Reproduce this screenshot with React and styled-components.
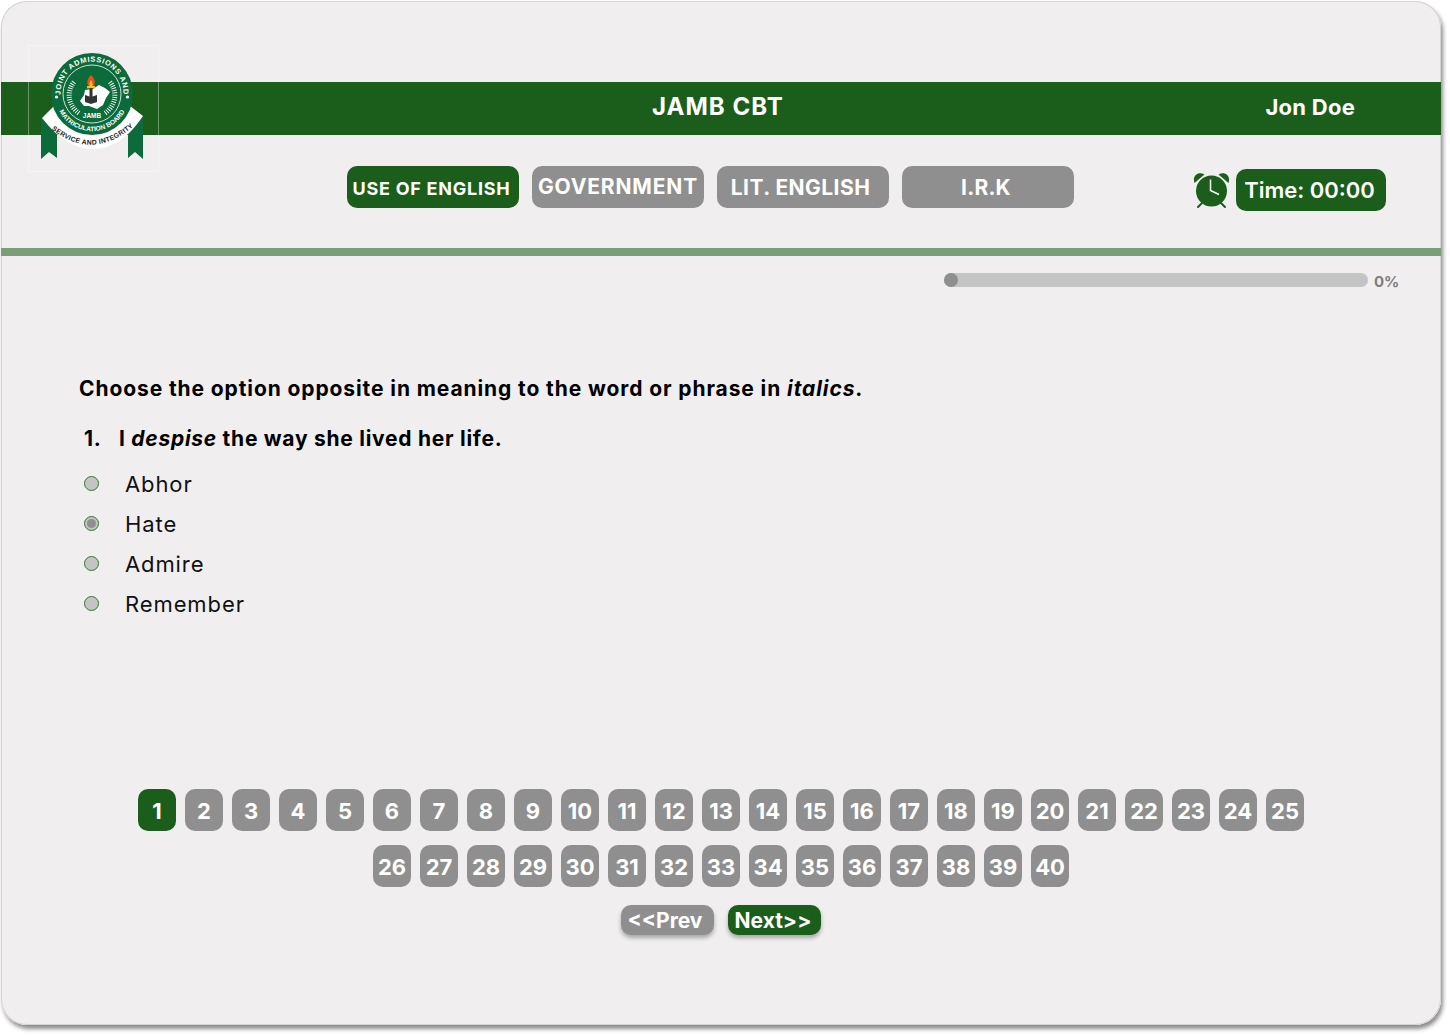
import React from 'react';
import styled, { createGlobalStyle } from 'styled-components';

const GREEN = '#1b5e1b';
const GREY = '#8f8f8f';
const LOGO_GREEN = '#0b6b3a';

const GlobalStyle = createGlobalStyle`
  html, body {
    margin: 0;
    padding: 0;
    background: #fff;
  }
  body {
    font-family: Inter, "Liberation Sans", sans-serif;
  }
`;

const Page = styled.div`
  box-sizing: border-box;
  width: 1450px;
  height: 1035px;
  padding: 1px;
  overflow: hidden;
`;

const Frame = styled.div`
  position: relative;
  box-sizing: border-box;
  width: 1440px;
  height: 1024px;
  padding-top: 81px;
  background: #f0eeef;
  border-radius: 26px;
  overflow: hidden;
  box-shadow: inset 0 0 0 1px #d4d2d3;
`;

const FrameShadow = styled.div`
  width: 1440px;
  border-radius: 26px;
  box-shadow: 2px 4px 4px rgba(0, 0, 0, 0.45);
`;

const Logo = styled.svg`
  position: absolute;
  left: 27px;
  top: 44px;
  width: 131px;
  height: 127px;
`;

const Header = styled.header`
  display: flex;
  align-items: center;
  height: 53px;
  background: ${GREEN};
  color: #fff;
  font-weight: 700;
`;

const Title = styled.div`
  margin: 0 0 4px 651px;
  font-size: 24px;
  letter-spacing: 1px;
`;

const UserName = styled.div`
  margin: 0 86px 4px auto;
  font-size: 22px;
  letter-spacing: 0.25px;
`;

const SubjectRow = styled.div`
  display: flex;
  align-items: flex-start;
  height: 113px;
  padding: 31px 55px 0 346px;
  box-sizing: border-box;
`;

const Subjects = styled.nav`
  display: flex;
  gap: 13px;
`;

const SubjectTab = styled.div`
  display: flex;
  align-items: center;
  justify-content: center;
  width: 172px;
  height: 42px;
  box-sizing: border-box;
  padding: ${(p) => p.$pad};
  border-radius: 10px;
  background: ${(p) => (p.$active ? GREEN : GREY)};
  color: #fff;
  font-weight: 700;
  font-size: ${(p) => p.$size}px;
  letter-spacing: ${(p) => p.$spacing}px;
  white-space: nowrap;
`;

const TimerGroup = styled.div`
  display: flex;
  align-items: center;
  gap: 6px;
  margin-left: auto;
  margin-top: 3px;
`;

const ClockIcon = styled.svg`
  width: 37px;
  height: 37px;
`;

const TimerPill = styled.div`
  display: flex;
  align-items: center;
  justify-content: center;
  box-sizing: border-box;
  width: 150px;
  height: 42px;
  padding-right: 3px;
  border-radius: 10px;
  background: ${GREEN};
  color: #fff;
  font-size: 22px;
  font-weight: 600;
`;

const Divider = styled.div`
  height: 8px;
  background: #7a9f78;
`;

const ProgressRow = styled.div`
  display: flex;
  align-items: center;
  gap: 6px;
  margin: 17px 0 0 943px;
  height: 14px;
`;

const ProgressTrack = styled.div`
  width: 424px;
  height: 14px;
  border-radius: 7px;
  background: #c4c4c4;
`;

const ProgressKnob = styled.div`
  width: 14px;
  height: 14px;
  border-radius: 50%;
  background: ${GREY};
`;

const ProgressLabel = styled.span`
  padding-top: 2px;
  font-size: 15px;
  font-weight: 700;
  color: #7d7d7d;
`;

const Question = styled.section`
  padding: 88px 0 0 78px;
`;

const Instruction = styled.p`
  margin: 0;
  font-size: 21px;
  line-height: 28px;
  font-weight: 700;
  color: #000;
  letter-spacing: 0.9px;
`;

const Prompt = styled.div`
  display: flex;
  margin: 22px 0 11px 5px;
  font-size: 21px;
  line-height: 28px;
  font-weight: 700;
  color: #000;
  letter-spacing: 0.73px;
`;

const PromptNumber = styled.span`
  width: 35px;
`;

const Options = styled.div`
  display: flex;
  flex-direction: column;
  padding-left: 5px;
`;

const Option = styled.label`
  display: flex;
  align-items: center;
  height: 40px;
  font-size: 22px;
  letter-spacing: 0.9px;
  color: #111;
`;

const Radio = styled.span`
  display: flex;
  align-items: center;
  justify-content: center;
  width: 15px;
  height: 15px;
  margin: -1px 26px 0 0;
  box-sizing: border-box;
  border-radius: 50%;
  border: 1px solid #2e7a2e;
  background: #c4c4c4;

  &::after {
    content: '';
    display: ${(p) => (p.$checked ? 'block' : 'none')};
    width: 9px;
    height: 9px;
    border-radius: 50%;
    background: ${GREY};
  }
`;

const Pagination = styled.div`
  position: absolute;
  left: 0;
  right: 0;
  bottom: 90px;
  display: flex;
  flex-direction: column;
  align-items: center;
`;

const NumberRow = styled.div`
  display: flex;
  gap: 9px;
  margin-bottom: 14px;
`;

const NumberButton = styled.div`
  display: flex;
  align-items: center;
  justify-content: center;
  box-sizing: border-box;
  width: 38px;
  height: 42px;
  padding-top: 1px;
  border-radius: 10px;
  background: ${(p) => (p.$active ? GREEN : GREY)};
  color: #fff;
  font-size: 22px;
  font-weight: 700;
`;

const NavRow = styled.div`
  display: flex;
  gap: 14px;
  margin-top: 4px;
`;

const NavButton = styled.div`
  display: flex;
  align-items: center;
  justify-content: center;
  box-sizing: border-box;
  width: 93px;
  height: 30px;
  padding-right: ${(p) => (p.$primary ? '3px' : '5px')};
  border-radius: 10px;
  background: ${(p) => (p.$primary ? GREEN : GREY)};
  color: #fff;
  font-size: 21px;
  font-weight: 700;
  box-shadow: 0 3px 4px rgba(0, 0, 0, 0.3);
`;

const JambLogo = () => (
  <Logo viewBox="28 45 131 127" aria-label="JAMB logo">
    <rect x="28.5" y="45.5" width="130" height="126" fill="none" stroke="#fff" strokeOpacity="0.35" />
    <defs>
      <path id="topArc" d="M61.5 101 A31.5 31.5 0 1 1 122.5 101" />
      <path id="bottomArc" d="M57.2 106.7 A37 37 0 0 0 126.8 106.7" />
      <path id="bandArc" d="M49 127 Q92 164 136 124" />
    </defs>
    <polygon points="41,117 57,127 57,158 49,152 41,159" fill={LOGO_GREEN} />
    <polygon points="128,127 143,117 143,159 135,152 128,158" fill={LOGO_GREEN} />
    <path d="M42 118 C58 139 75 149 93 149 C112 149 128 138 143 116 L130 106 L54 106 Z" fill="#fff" />
    <circle cx="92" cy="94" r="41" fill={LOGO_GREEN} />
    <circle cx="92" cy="94" r="29" fill="none" stroke="#fff" strokeWidth="0.8" />
    <circle cx="56.5" cy="97" r="1.6" fill="#fff" />
    <circle cx="127.5" cy="97" r="1.6" fill="#fff" />
    <text fontFamily="Liberation Sans, sans-serif" fontSize="7.4" fontWeight="700" fill="#fff" letterSpacing="0.7">
      <textPath href="#topArc" startOffset="50%" textAnchor="middle">JOINT ADMISSIONS AND</textPath>
    </text>
    <text fontFamily="Liberation Sans, sans-serif" fontSize="6.6" fontWeight="700" fill="#fff">
      <textPath href="#bottomArc" startOffset="50%" textAnchor="middle">MATRICULATION BOARD</textPath>
    </text>
    <text fontFamily="Liberation Sans, sans-serif" fontSize="6.8" fontWeight="700" fill="#1a1a1a" letterSpacing="0.3">
      <textPath href="#bandArc" startOffset="50%" textAnchor="middle">SERVICE AND INTEGRITY</textPath>
    </text>
    <path d="M80 101 L84 95 L85 90 L93 89 L99 85 L105 88 L110 92 L106 98 L103 105 L97 109 L89 106 L84 106 Z" fill="#fff" />
    <g fill="none" stroke="#fff" strokeLinecap="butt">
      <path d="M74 82 C66 92 68 106 80 114" strokeWidth="5" strokeDasharray="0.9 1.4" />
      <path d="M110 82 C118 92 116 106 104 114" strokeWidth="5" strokeDasharray="0.9 1.4" />
    </g>
    <path d="M91 75 C86 80 86 85 91 88 C96 85 96 80 91 75 Z" fill="#e8501e" />
    <path d="M91 80 C89 83 89 86 91 87 C93 86 93 83 91 80 Z" fill="#f7c21c" />
    <rect x="87" y="86" width="8" height="2.4" fill="#f7c21c" />
    <rect x="89.5" y="88" width="3" height="10" fill="#333" />
    <path d="M85 95 L91 97 L97 95 L97 102 L91 104 L85 102 Z" fill="#333" />
    <text x="92" y="118" fontFamily="Liberation Sans, sans-serif" fontSize="6.5" fontWeight="700" fill="#fff" textAnchor="middle">JAMB</text>
  </Logo>
);

const AlarmClock = () => (
  <ClockIcon viewBox="0 0 37 37" aria-hidden="true">
    <path d="M1.5 11 C-1 4 5 -1 11.5 2.5 Z" fill={GREEN} />
    <path d="M35.5 11 C38 4 32 -1 25.5 2.5 Z" fill={GREEN} />
    <path d="M5 35 L9 31 M32 35 L28 31" stroke={GREEN} strokeWidth="2" strokeLinecap="round" />
    <circle cx="18.5" cy="19" r="15.5" fill={GREEN} />
    <path d="M17.5 7.5 V18.5 L26 22.5" fill="none" stroke="#fff" strokeWidth="1.5" />
  </ClockIcon>
);

const subjects = [
  { name: 'USE OF ENGLISH', size: 18, spacing: 0.75, active: true, pad: '2px 3px 0 0' },
  { name: 'GOVERNMENT', size: 21, spacing: 0.85, pad: '0 0 2px 0' },
  { name: 'LIT. ENGLISH', size: 21, spacing: 0.45, pad: '1px 5px 0 0' },
  { name: 'I.R.K', size: 21, spacing: 0.2, pad: '1px 4px 0 0' },
];

const options = ['Abhor', 'Hate', 'Admire', 'Remember'];
const range = (from, to) => Array.from({ length: to - from + 1 }, (_, i) => from + i);

const App = () => {
  return (
    <Page>
      <GlobalStyle />
      <FrameShadow>
        <Frame>
          <Header>
            <Title>JAMB CBT</Title>
            <UserName>Jon Doe</UserName>
          </Header>
          <JambLogo />
          <SubjectRow>
            <Subjects>
              {subjects.map((s) => (
                <SubjectTab key={s.name} $active={s.active} $pad={s.pad} $size={s.size} $spacing={s.spacing}>
                  {s.name}
                </SubjectTab>
              ))}
            </Subjects>
            <TimerGroup>
              <AlarmClock />
              <TimerPill>Time: 00:00</TimerPill>
            </TimerGroup>
          </SubjectRow>
          <Divider />
          <ProgressRow>
            <ProgressTrack>
              <ProgressKnob />
            </ProgressTrack>
            <ProgressLabel>0%</ProgressLabel>
          </ProgressRow>
          <Question>
            <Instruction>
              Choose the option opposite in meaning to the word or phrase in <em>italics</em>.
            </Instruction>
            <Prompt>
              <PromptNumber>1.</PromptNumber>
              <span>
                I <em>despise</em> the way she lived her life.
              </span>
            </Prompt>
            <Options>
              {options.map((o) => (
                <Option key={o}>
                  <Radio $checked={o === 'Hate'} />
                  {o}
                </Option>
              ))}
            </Options>
          </Question>
          <Pagination>
            <NumberRow>
              {range(1, 25).map((n) => (
                <NumberButton key={n} $active={n === 1}>{n}</NumberButton>
              ))}
            </NumberRow>
            <NumberRow>
              {range(26, 40).map((n) => (
                <NumberButton key={n}>{n}</NumberButton>
              ))}
            </NumberRow>
            <NavRow>
              <NavButton>&lt;&lt;Prev</NavButton>
              <NavButton $primary>Next&gt;&gt;</NavButton>
            </NavRow>
          </Pagination>
        </Frame>
      </FrameShadow>
    </Page>
  );
};

export default App;
